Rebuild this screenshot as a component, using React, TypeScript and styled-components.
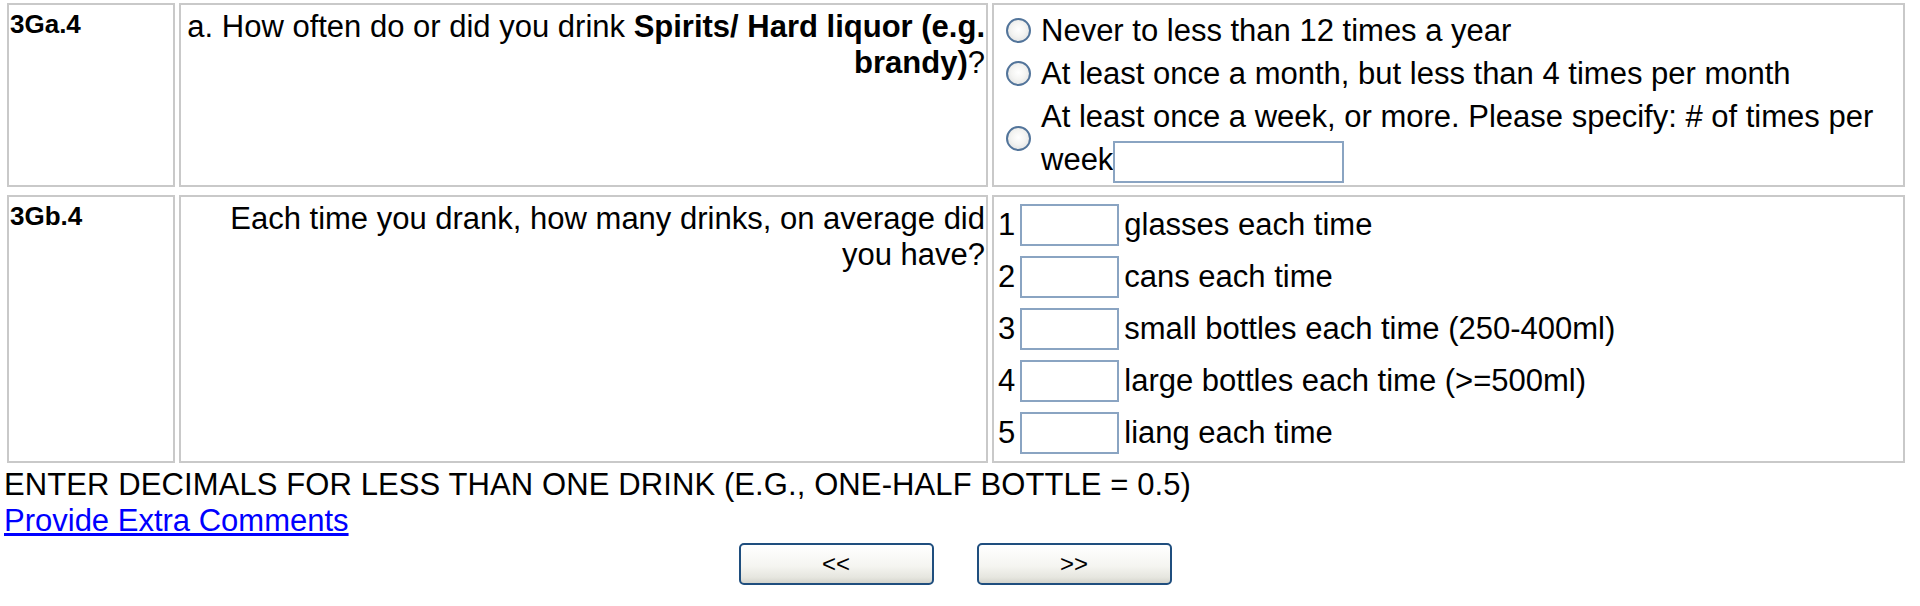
import React from 'react'
import styled, { createGlobalStyle } from 'styled-components'

const GlobalStyle = createGlobalStyle`
  body {
    margin: 0;
    background: #fff;
    color: #000;
    font-family: 'Liberation Sans', Arial, sans-serif;
  }
`

const Page = styled.div`
  width: 1902px;
  padding: 3px 0 0 4px;
  font-size: 31px;
`

const QuestionGrid = styled.div`
  display: grid;
  grid-template-columns: 168px 809px 913px;
  column-gap: 4px;
  row-gap: 8px;
  margin-left: 3px;
`

const Cell = styled.div`
  border: 2px solid #c9c9c9;
  background: #fff;
  padding: 2px;
  min-width: 0;
`

const CodeCell = styled(Cell)`
  font-size: 26px;
  font-weight: bold;
  line-height: 30px;
  padding: 4px 2px 2px 1px;
`

const QuestionCell = styled(Cell)`
  text-align: right;
  padding: 4px 1px 2px 2px;
`

const OptionList = styled.div`
  display: grid;
  grid-template-columns: 45px 1fr;
  align-items: center;
  padding-top: 2px;
`

const Radio = styled.input.attrs({ type: 'radio' })`
  appearance: none;
  width: 25px;
  height: 25px;
  margin: 0 0 0 10px;
  border: 2px solid #52749a;
  border-radius: 50%;
  background: radial-gradient(circle at 50% 45%, #ffffff 0, #f4f4f2 45%, #d9dbdc 100%);
  box-sizing: border-box;
`

const OptionText = styled.div`
  line-height: 43px;
`

const TextBox = styled.input.attrs({ type: 'text' })<{ $w: number }>`
  width: ${({ $w }) => $w}px;
  height: 42px;
  box-sizing: border-box;
  border: 2px solid #8aa4c2;
  background: #fff;
  vertical-align: middle;
  margin: 0 ${({ $w }) => ($w > 150 ? 0 : 5)}px;
  padding: 0 4px;
  font: inherit;
`

const AmountList = styled.div`
  display: flex;
  flex-direction: column;
  padding-left: 2px;
`

const AmountRow = styled.div`
  display: flex;
  align-items: center;
  height: 52px;
  white-space: nowrap;
`

const Note = styled.div`
  margin-top: 4px;
  letter-spacing: 0.1px;
`

const CommentLink = styled.a`
  color: #0000ff;
  text-decoration: underline;
  cursor: pointer;
`

const NavBar = styled.div`
  display: flex;
  justify-content: center;
  gap: 43px;
  margin-top: 4px;
`

const NavButton = styled.button`
  width: 195px;
  height: 42px;
  border: 2px solid #1f4e7e;
  border-radius: 5px;
  background: linear-gradient(#ffffff, #f5f5f1 55%, #e6e6df 85%, #d4d4cc);
  font-family: 'Liberation Sans', Arial, sans-serif;
  font-size: 24px;
  color: #000;
  cursor: pointer;
`

const frequency = [
  'Never to less than 12 times a year',
  'At least once a month, but less than 4 times per month',
]

const amounts = [
  'glasses each time',
  'cans each time',
  'small bottles each time (250-400ml)',
  'large bottles each time (>=500ml)',
  'liang each time',
]

export default function App() {
  return (
    <>
      <GlobalStyle />
      <Page>
        <QuestionGrid>
          <CodeCell>3Ga.4</CodeCell>
          <QuestionCell>
            a. How often do or did you drink <b>Spirits/ Hard liquor (e.g. brandy)</b>?
          </QuestionCell>
          <Cell>
            <OptionList>
              {frequency.map((f) => (
                <React.Fragment key={f}>
                  <Radio name="freq" />
                  <OptionText>{f}</OptionText>
                </React.Fragment>
              ))}
              <Radio name="freq" />
              <OptionText>
                At least once a week, or more. Please specify: # of times per week
                <TextBox $w={231} />
              </OptionText>
            </OptionList>
          </Cell>

          <CodeCell>3Gb.4</CodeCell>
          <QuestionCell>Each time you drank, how many drinks, on average did you have?</QuestionCell>
          <Cell>
            <AmountList>
              {amounts.map((a, i) => (
                <AmountRow key={a}>
                  {i + 1}
                  <TextBox $w={99} />
                  {a}
                </AmountRow>
              ))}
            </AmountList>
          </Cell>
        </QuestionGrid>
        <Note>ENTER DECIMALS FOR LESS THAN ONE DRINK (E.G., ONE-HALF BOTTLE = 0.5)</Note>
        <CommentLink>Provide Extra Comments</CommentLink>
        <NavBar>
          <NavButton>&lt;&lt;</NavButton>
          <NavButton>&gt;&gt;</NavButton>
        </NavBar>
      </Page>
    </>
  )
}
